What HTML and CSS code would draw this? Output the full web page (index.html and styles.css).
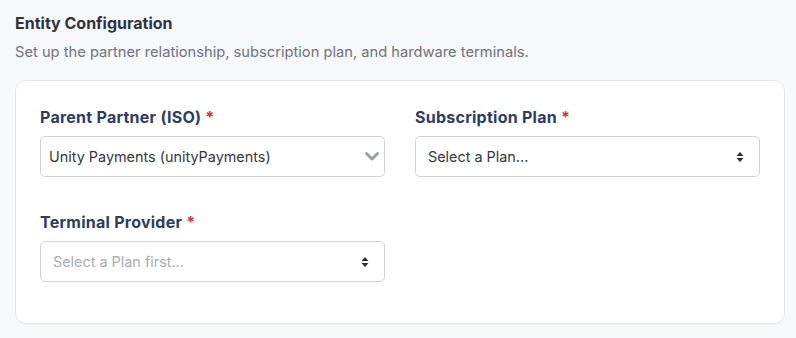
FILE: index.html
```html
<!DOCTYPE html>
<html>
<head>
<meta charset="utf-8">
<link rel="stylesheet" href="styles.css">
</head>
<body>
<div class="page">
  <h2 class="title">Entity Configuration</h2>
  <p class="desc">Set up the partner relationship, subscription plan, and hardware terminals.</p>
  <div class="card">
    <div class="grid">
      <div class="field">
        <label class="label">Parent Partner (ISO) <span class="req">*</span></label>
        <div class="select select-custom">
          <span class="value">Unity Payments (unityPayments)</span>
          <svg class="chev" width="16" height="11" viewBox="0 0 16 11"><path d="M2.5 2.5 L8 8 L13.5 2.5" fill="none" stroke="#9c9fa4" stroke-width="3" stroke-linecap="round" stroke-linejoin="round"/></svg>
        </div>
      </div>
      <div class="field">
        <label class="label">Subscription Plan <span class="req">*</span></label>
        <div class="select select-native">
          <span class="value">Select a Plan...</span>
          <svg class="updown" width="8" height="12" viewBox="0 0 8 12"><path d="M4 1 L7.5 5 H0.5 Z M4 11 L7.5 7 H0.5 Z" fill="#2c2f33"/></svg>
        </div>
      </div>
      <div class="field">
        <label class="label">Terminal Provider <span class="req">*</span></label>
        <div class="select select-native">
          <span class="value placeholder">Select a Plan first...</span>
          <svg class="updown" width="8" height="12" viewBox="0 0 8 12"><path d="M4 1 L7.5 5 H0.5 Z M4 11 L7.5 7 H0.5 Z" fill="#2c2f33"/></svg>
        </div>
      </div>
    </div>
  </div>
</div>
</body>
</html>
```

FILE: styles.css
```css
html, body {
  margin: 0;
  padding: 0;
  background: #f7f8fa;
}
body {
  font-family: "Inter", "Noto Sans", sans-serif;
  color: #2d3139;
}
.page {
  padding: 13px 12px 0 15px;
}
.title {
  margin: 0;
  font-size: 16px;
  font-weight: 700;
  line-height: 20px;
  color: #30333a;
}
.desc {
  margin: 9px 0 0;
  font-size: 14.7px;
  line-height: 20px;
  color: #6e737c;
}
.card {
  margin-top: 18px;
  width: 770px;
  box-sizing: border-box;
  background: #ffffff;
  border: 1px solid #e1e4e8;
  border-radius: 11px;
  padding: 26px 24px 41px 24px;
}
.grid {
  display: grid;
  grid-template-columns: 345px 345px;
  column-gap: 30px;
  row-gap: 35px;
}
.field {
  display: flex;
  flex-direction: column;
}
.label {
  font-size: 16px;
  font-weight: 700;
  line-height: 20px;
  letter-spacing: 0.25px;
  color: #2c3e5f;
  margin-bottom: 9px;
}
.req {
  color: #e0283f;
}
.select {
  height: 41px;
  box-sizing: border-box;
  border: 1px solid #cfd2d7;
  border-radius: 5px;
  background: #fff;
  display: flex;
  align-items: center;
  justify-content: space-between;
}
.select-custom {
  padding: 0 4px 0 8px;
}
.select-native {
  padding: 0 15px 0 12px;
}
.value {
  font-size: 14.4px;
  color: #34383e;
}
.placeholder {
  color: #a8adb4;
}
.chev,
.updown {
  display: block;
}
```
